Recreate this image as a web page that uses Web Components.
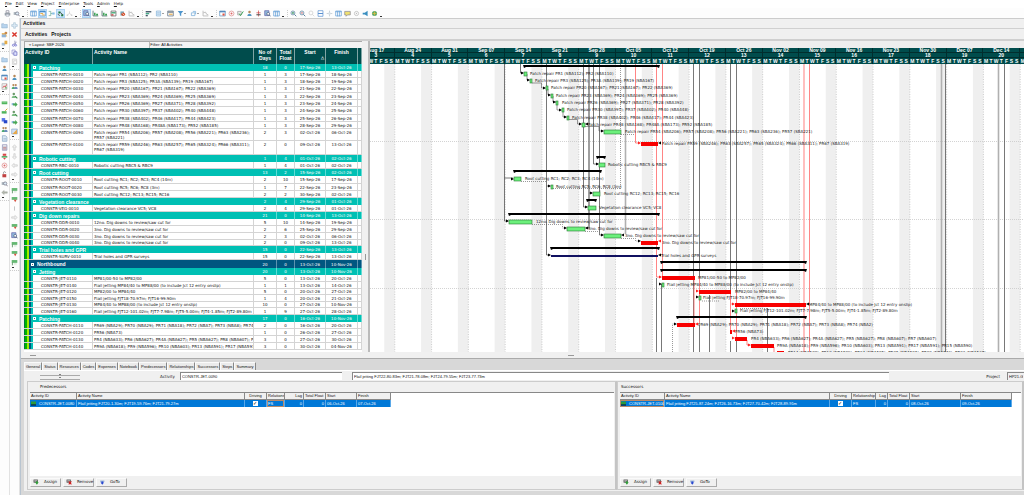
<!DOCTYPE html>
<html lang="en">
<head>
<meta charset="utf-8">
<title>Activities</title>
<style>
  html, body { height: 100%; margin: 0; }
  body {
    --ui: "DejaVu Sans", "Liberation Sans", sans-serif;
    --sans: "Liberation Sans", Arial, sans-serif;
    --face: #f0f0f0;
    --head: #004c4c;
    --group: #00c0b4;
    --band: #005680;
    font: 4px/6px var(--sans);
    color: #111;
    background: #fff;
    overflow: hidden;
  }
</style>
</head>
<body>
<planner-app></planner-app>

<script>
// ---------- icons, all on a 10x10 grid ----------
const ICONS = {
  print: '<path d="M3 1h4v3H3z" fill="#fff" stroke="#889"/><rect x="1" y="4" width="8" height="4" rx="1" fill="#9aa3ab"/><path d="M3 6h4v3H3z" fill="#e8eef4" stroke="#889" stroke-width=".6"/>',
  preview: '<path d="M1 3h6v4H1z" fill="#aab4bc"/><circle cx="6" cy="5" r="2.3" fill="#dcebf5" stroke="#778"/><path d="M7.6 6.8L9.5 9" stroke="#778" stroke-width="1.2"/>',
  columns: '<path d="M1 1.5h8v7H1z" fill="#fff" stroke="#5b9bd5"/><path d="M1 2.5h8M3.7 2v7M6.3 2v7" stroke="#5b9bd5"/>',
  gantt: '<path d="M1 1.5h8v7H1z" fill="#fff" stroke="#4a90d0"/><path d="M1 2.5h8" stroke="#2f7cc4" stroke-width="1.6"/><path d="M2 5h4M4 7h4" stroke="#e0a030" stroke-width="1.2"/>',
  network: '<path d="M1 2h3M1 8h3M4 2v6M4 5h3" stroke="#6a9" fill="none"/><rect x="6" y="3.5" width="3.5" height="3" fill="#8cc0e8"/>',
  trace: '<path d="M2 2h3v3H2zM6 6h3v3H6z" fill="#1f7a3a"/><path d="M5 3.5L8 6.5M1 6l3 2" stroke="#222"/>',
  fade: '<path d="M5 2v3M2 7l3-2 3 2" stroke="#ccc" fill="none"/><path d="M1 6.5h2v2H1zM7 6.5h2v2H7z" fill="#d4d4d4"/>',
  find: '<path d="M1 1h6v7H1z" fill="#8fb8dc" stroke="#66a"/><circle cx="6" cy="5.5" r="2" fill="#fff" stroke="#457"/><path d="M7.4 7L9.3 9" stroke="#457" stroke-width="1.3"/>',
  chart: '<path d="M1.5 1v7.5H9" stroke="#355" fill="none"/><path d="M3 4h2v4H3zM6 5.5h2.5V8H6z" fill="#2f9e4a"/>',
  grid: '<path d="M1.5 1.5h7v7h-7z" fill="#fff" stroke="#555"/><path d="M2 3h6v2H2z" fill="#4a7"/><path d="M2 6h3v2H2z" fill="#c44"/>',
  people: '<circle cx="5" cy="3" r="1.8" fill="#b88858"/><path d="M2 8.5c0-4 6-4 6 0z" fill="#4e93c0"/>',
  team: '<circle cx="3.4" cy="3" r="1.5" fill="#b88858"/><circle cx="6.8" cy="3" r="1.5" fill="#b88858"/><path d="M1 8.5c0-4 5-4 5 0z" fill="#4eaa70"/><path d="M4.5 8.5c0-4 5-4 5 0z" fill="#6a8cbc"/>',
  fire: '<path d="M2 2h5v6H2z" fill="#7ab"/><circle cx="6" cy="6" r="2.6" fill="#d4502c"/><path d="M5 5l2 2" stroke="#fff"/>',
  line: '<path d="M1.5 1v7.5H9M2 4l3-1 1.5 3L9 7" stroke="#a9a9a9" fill="none"/>',
  bars: '<path d="M1 1.5h8v2H1z" fill="#456"/><path d="M1 4.2h5v2H1z" fill="#4a8"/><path d="M1 7h3v2H1z" fill="#456"/>',
  sheet: '<path d="M2 1.5h6v7H2z" fill="#eaf3fb" stroke="#7fb0d8"/><path d="M3 4h4M3 6h4" stroke="#7fb0d8"/>',
  group: '<path d="M1 1.5h8v7H1z" fill="#fff" stroke="#567"/><path d="M1.5 3h7" stroke="#567" stroke-width="1.5"/><path d="M3 6h5" stroke="#e3a33a" stroke-width="1.5"/>',
  funnel: '<path d="M1 1.5h8L6 5v4L4 7.5V5z" fill="#4c94cc"/>',
  clip: '<path d="M2 4h5v4H2zM4 2h4v4" fill="none" stroke="#6fa8d8"/>',
  calendar: '<path d="M1 1.5h8v7H1z" fill="#fff" stroke="#5a8fc0"/><path d="M1 2.5h8" stroke="#3d78b4" stroke-width="1.6"/><path d="M5 5h3v3H5z" fill="#e05545"/>',
  target: '<circle cx="5" cy="5" r="3.5" fill="none" stroke="#d88"/><circle cx="5" cy="5" r="1.4" fill="#d66"/>',
  check: '<path d="M1 2h5v5H1z" fill="#eee" stroke="#999"/><path d="M3 5l2 3 4-6" stroke="#2f9e4a" stroke-width="1.3" fill="none"/>',
  level: '<path d="M5 .8v8.4M2 4h6" stroke="#c44"/><path d="M2 6h6v1.6H2z" fill="#555"/>',
  zoomin: '<circle cx="4.2" cy="4.2" r="2.8" fill="#eef6fc" stroke="#5a7f9c"/><path d="M6.3 6.3L9 9" stroke="#5a7f9c" stroke-width="1.4"/><path d="M2.8 4.2h2.8M4.2 2.8v2.8" stroke="#284"/>',
  zoomout: '<circle cx="4.2" cy="4.2" r="2.8" fill="#eef6fc" stroke="#5a7f9c"/><path d="M6.3 6.3L9 9" stroke="#5a7f9c" stroke-width="1.4"/><path d="M2.8 4.2h2.8" stroke="#c33"/>',
  zoomoff: '<circle cx="4.2" cy="4.2" r="2.8" fill="none" stroke="#ccc"/><path d="M6.3 6.3L9 9" stroke="#ccc"/>',
  split: '<path d="M1.5 1h7v8h-7z" fill="#fff" stroke="#5a8fd0"/><path d="M1.5 5h7" stroke="#5a8fd0" stroke-width="1.5"/>',
  move: '<path d="M5 1v8M1 5h8" stroke="#b4c0c8"/><path d="M3.5 3.5h3v3h-3z" fill="#d8e2ea"/>',
  note: '<path d="M1 2h8v5H5L3 9V7H1z" fill="#f0e070" stroke="#889"/>',
  gear: '<circle cx="5" cy="5" r="3" fill="none" stroke="#c8c8c8" stroke-width="1.4"/><circle cx="5" cy="5" r="1" fill="#bbb"/>',
  horn: '<path d="M1 4h3l4-3v8L4 6.5H1z" fill="#3a8fc0"/>',
  globe: '<circle cx="5" cy="5" r="3.6" fill="#58a868"/><path d="M2 5h6M5 2v6" stroke="#e8c040"/>',
  plus: '<path d="M3.7 1h2.6v2.7H9v2.6H6.3V9H3.7V6.3H1V3.7h2.7z" fill="#dbe9f4" stroke="#9bb6cc" stroke-width=".7"/>',
  cross: '<path d="M2 2l6 6M8 2L2 8" stroke="#d8342a" stroke-width="2"/>',
  scissors: '<path d="M5.5 1L6 6M8 3L4 6.5" stroke="#77a"/><circle cx="3.5" cy="7.5" r="1.5" fill="none" stroke="#66c"/><circle cx="6.8" cy="7.5" r="1.3" fill="none" stroke="#66c"/>',
  copy: '<path d="M1.5 1.5h4.5v5.5H1.5z" fill="#fff" stroke="#88c"/><path d="M4 4h4.5v5H4z" fill="#dfe3ff" stroke="#66b"/>',
  paste: '<path d="M2 1.5h6v7.5H2z" fill="#f2f2f2" stroke="#ccc"/><path d="M4 4h4v4H4z" fill="#fff" stroke="#ccc"/>',
  folder: '<path d="M1 2.5h3l1 1h4v5H1z" fill="#b8d4ee" stroke="#86a8c8" stroke-width=".7"/>',
  open: '<path d="M1 3h5l3 5H2z" fill="#e8b868"/><circle cx="7" cy="3" r="2" fill="#c98a4b"/><path d="M1 5h6v4H1z" fill="#8fb3d8"/>',
  bag: '<path d="M1 4h5v4H1z" fill="#a9c3dc"/><path d="M5 1h4v5H5z" fill="#e4ac48"/>',
  greenbar: '<path d="M1 3.5h8v4H1z" fill="#4fb45c"/><path d="M2 4.5h6" stroke="#a8e0ac"/>',
  greenedit: '<path d="M1 4.5h7v3.5H1z" fill="#4fb45c"/><path d="M6 4l3-3" stroke="#d49a30" stroke-width="1.4"/>',
  blocks: '<path d="M1 1.5h5v5H1z" fill="#5a78e8"/><path d="M4 4.5h5v4.5H4z" fill="#2748c8"/>',
  doc: '<path d="M2 1h4.5L8.5 3v6H2z" fill="#dce8f4" stroke="#8aa8c4"/><path d="M3.5 5h4M3.5 7h4" stroke="#8aa8c4" stroke-width=".7"/>',
  calc: '<path d="M2 1h6.5v8H2z" fill="#c8c8d4" stroke="#99b"/><path d="M3 2.5h4.5" stroke="#fff"/><path d="M3 5h4.5M3 7h4.5" stroke="#c88"/>',
  redgreen: '<path d="M2.5 1h5v3h-5z" fill="#d84848"/><path d="M1 4.5h8v2H1z" fill="#3d9e4e"/><path d="M3 7h4l-2 2.5z" fill="#d84848"/>',
  lock: '<path d="M2 4.5h5.5v4.5H2z" fill="#c04040"/><path d="M3.5 4V2.5c0-2 3-2 3 0" stroke="#777" fill="none"/>',
  graph: '<path d="M1.5 1h7v8h-7z" fill="#f4f4f4" stroke="#aaa"/><path d="M2.5 7l2-3 1.5 2 2-4" stroke="#c33" fill="none"/><path d="M6 6h2v2H6z" fill="#4a4"/>',
  left: '<path d="M1 5l3.5-3v2H9v2H4.5v2z" fill="#b4b8ae" stroke="#8c9088" stroke-width=".5"/>',
  pleft: '<path d="M1 5l3.5-3v2H9v2H4.5v2z" fill="#f2f2f2" stroke="#bbb" stroke-width=".7"/>',
  pright: '<path d="M9 5L5.5 2v2H1v2h4.5v2z" fill="#f2f2f2" stroke="#bbb" stroke-width=".7"/>',
  pup: '<path d="M5 1l3 3.5H6V9H4V4.5H2z" fill="#f2f2f2" stroke="#bbb" stroke-width=".7"/>',
  pdown: '<path d="M5 9l3-3.5H6V1H4v4.5H2z" fill="#f2f2f2" stroke="#bbb" stroke-width=".7"/>',
  addright: '<path d="M1 3h4v3H1z" fill="#8cb4dc"/><path d="M9.5 5L6 1.5v2H3v3h3v2z" fill="#48a854"/>',
  addman: '<circle cx="4" cy="3" r="1.8" fill="#6c9c6c"/><path d="M1 8.5c0-4 6-4 6 0z" fill="#7cbc84"/><path d="M6 6l3 3" stroke="#3a8a44" stroke-width="1.5"/>',
  pencil: '<path d="M1 1.5h8v7H1z" fill="#cfe0f4" stroke="#88a8d0"/><path d="M2 8.5L8.5 2v6.5z" fill="#e8a848"/>',
  tick: '<path d="M5 2v6" stroke="#aaa"/>',
  flag: '<path d="M1 1.5h8v4H1z" fill="#65b872"/><path d="M2 5v4" stroke="#377a40"/><path d="M4 7h4" stroke="#b8d8b8"/>',
  flagdown: '<path d="M1 1.5h8v4H1z" fill="#65b872"/><path d="M4 5.5h4L6 9z" fill="#d85040"/>',
  assign: '<path d="M1 1h7v5H1z" fill="#444"/><path d="M2 2h5v2.5H2z" fill="#bbb"/><path d="M5.5 3.5h2v2h2L6.5 9.5 3.5 5.5h2z" fill="#2a9e34"/>',
  remove: '<path d="M1 1h7v5H1z" fill="#444"/><path d="M2 2h5v2.5H2z" fill="#bbb"/><path d="M4.5 4l4.5 5M9 4L4.5 9" stroke="#d02020" stroke-width="1.7"/>',
  goto: '<path d="M2 2.5h7v2.5H2z" fill="#9bb4d8"/><path d="M4 4h3v2h1.5L5.5 9.5 2.5 6H4z" fill="#2848d0"/>',
};

// ---------- activity rows: one list feeds the table and the bars ----------
const G = "#6cf07c", R = "#f80000";
const ROWS = [
  { kind: "group", h: 7, name: "Patching", days: 18, float: 0, start: "17-Sep-26", finish: "13-Oct-26", bar: [524, 659] },
  { h: 7, id: "CONSTR-PATCH-0010", name: "Patch repair PR1 (SBA112); PR2 (SBA110)", days: 1, float: 3, start: "17-Sep-26", finish: "18-Sep-26", bar: [524, 527, G], lx: 530 },
  { h: 7, id: "CONSTR-PATCH-0020", name: "Patch repair PR3 (SBA125); PR3A (SBA139); PR19 (SBA167)", days: 1, float: 3, start: "18-Sep-26", finish: "19-Sep-26", bar: [530, 532, G], lx: 535 },
  { h: 8, id: "CONSTR-PATCH-0030", name: "Patch repair PR20 (SBA167); PR21 (SBA167); PR22 (SBA369)", days: 1, float: 3, start: "21-Sep-26", finish: "22-Sep-26", bar: [546, 548, G], lx: 551 },
  { h: 7, id: "CONSTR-PATCH-0040", name: "Patch repair PR23 (SBA369); PR24 (SBA369); PR25 (SBA369)", days: 1, float: 3, start: "22-Sep-26", finish: "23-Sep-26", bar: [551, 553, G], lx: 556 },
  { h: 7, id: "CONSTR-PATCH-0050", name: "Patch repair PR26 (SBA369); PR27 (SBA371); PR28 (SBA392)", days: 1, float: 3, start: "23-Sep-26", finish: "24-Sep-26", bar: [556, 558, G], lx: 562 },
  { h: 8, id: "CONSTR-PATCH-0060", name: "Patch repair PR30 (SBA397); PR37 (SBA402); PR40 (SBA448)", days: 1, float: 3, start: "24-Sep-26", finish: "25-Sep-26", bar: [562, 564, G], lx: 567 },
  { h: 7, id: "CONSTR-PATCH-0070", name: "Patch repair PR38 (SBA402); PR46 (SBA417); PR44 (SBA423)", days: 1, float: 3, start: "25-Sep-26", finish: "26-Sep-26", bar: [567, 569, G], lx: 572 },
  { h: 7, id: "CONSTR-PATCH-0080", name: "Patch repair PR48 (SBA168); PR48A (SBA173); PR52 (SBA185)", days: 1, float: 3, start: "28-Sep-26", finish: "29-Sep-26", bar: [582, 585, G], lx: 588 },
  { h: 12, id: "CONSTR-PATCH-0090", name: "Patch repair PR54 (SBA206); PR57 (SBA208); PR56 (SBA221); PR63 (SBA236); PR57 (SBA221)", days: 2, float: 3, start: "02-Oct-26", finish: "06-Oct-26", bar: [604, 621, G], lx: 625 },
  { h: 14, id: "CONSTR-PATCH-0100", name: "Patch repair PR59 (SBA246); PR63 (SBA257); PR65 (SBA324); PR66 (SBA311); PR67 (SBA319)", days: 2, float: 0, start: "09-Oct-26", finish: "13-Oct-26", bar: [641, 658, R], lx: 662 },
  { kind: "group", h: 7, name: "Robotic cutting", days: 1, float: 4, start: "01-Oct-26", finish: "02-Oct-26", bar: [597, 605] },
  { h: 7, id: "CONSTR-RBC-0010", name: "Robotic cutting RBC5 & RBC9", days: 1, float: 4, start: "01-Oct-26", finish: "02-Oct-26", bar: [599, 605, G], lx: 608 },
  { kind: "group", h: 7, name: "Root cutting", days: 13, float: 2, start: "15-Sep-26", finish: "02-Oct-26", bar: [514, 601] },
  { h: 8, id: "CONSTR-ROOT-0010", name: "Root cutting RC1; RC2; RC3; RC4 (14m)", days: 2, float: 10, start: "15-Sep-26", finish: "17-Sep-26", bar: [514, 521, G], lx: 525 },
  { h: 7, id: "CONSTR-ROOT-0020", name: "Root cutting RC5; RC6; RC8 (3m)", days: 1, float: 7, start: "22-Sep-26", finish: "23-Sep-26", bar: [551, 553, G], lx: 556 },
  { h: 7, id: "CONSTR-ROOT-0030", name: "Root cutting RC12; RC13; RC15; RC16", days: 2, float: 2, start: "30-Sep-26", finish: "02-Oct-26", bar: [593, 600, G], lx: 604 },
  { kind: "group", h: 7, name: "Vegetation clearance", days: 2, float: 4, start: "29-Sep-26", finish: "01-Oct-26", bar: [587, 596] },
  { h: 7, id: "CONSTR-VEG-0010", name: "Vegetation clearance VC5; VC8", days: 2, float: 4, start: "29-Sep-26", finish: "01-Oct-26", bar: [588, 596, G], lx: 599 },
  { kind: "group", h: 7, name: "Dig down repairs", days: 21, float: 0, start: "14-Sep-26", finish: "13-Oct-26", bar: [509, 659] },
  { h: 7, id: "CONSTR-DDR-0010", name: "12no. Dig downs to review/saw cut for", days: 5, float: 10, start: "14-Sep-26", finish: "19-Sep-26", bar: [509, 532, G], lx: 536 },
  { h: 7, id: "CONSTR-DDR-0020", name: "3no. Dig downs to review/saw cut for", days: 2, float: 6, start: "25-Sep-26", finish: "29-Sep-26", bar: [567, 585, G], lx: 588 },
  { h: 7, id: "CONSTR-DDR-0030", name: "3no. Dig downs to review/saw cut for", days: 2, float: 3, start: "02-Oct-26", finish: "06-Oct-26", bar: [604, 621, G], lx: 625 },
  { h: 6, id: "CONSTR-DDR-0040", name: "3no. Dig downs to review/saw cut for", days: 2, float: 0, start: "09-Oct-26", finish: "13-Oct-26", bar: [641, 658, R], lx: 662 },
  { kind: "group", h: 7, name: "Trial holes and GPR", days: 15, float: 0, start: "22-Sep-26", finish: "13-Oct-26", bar: [551, 659] },
  { h: 7, id: "CONSTR-SURV-0010", name: "Trial holes and GPR surveys", days: 15, float: 0, start: "22-Sep-26", finish: "13-Oct-26", bar: [551, 658, "#101060"], lx: 661 },
  { kind: "band", h: 8, name: "Northbound", days: 20, float: 0, start: "13-Oct-26", finish: "10-Nov-26", bar: [661, 806] },
  { kind: "group", h: 7, name: "Jetting", days: 20, float: 0, start: "13-Oct-26", finish: "10-Nov-26", bar: [661, 806] },
  { h: 7, id: "CONSTR-JET-0110", name: "MP81/00-50 to MP82/00", days: 5, float: 0, start: "13-Oct-26", finish: "20-Oct-26", bar: [662, 695, R], lx: 698 },
  { h: 7, id: "CONSTR-JET-0140", name: "Flail jetting MP84/40 to MP88/00 (to include Jct 12 entry onslip)", days: 1, float: 1, start: "13-Oct-26", finish: "14-Oct-26", bar: [662, 664, G], lx: 667 },
  { h: 6, id: "CONSTR-JET-0120", name: "MP82/00 to MP84/40", days: 5, float: 0, start: "20-Oct-26", finish: "27-Oct-26", bar: [699, 731, R], lx: 735 },
  { h: 7, id: "CONSTR-JET-0150", name: "Flail jetting FJT18-70.97m; FJT16-99.90m", days: 1, float: 4, start: "20-Oct-26", finish: "21-Oct-26", bar: [699, 701, G], lx: 703 },
  { h: 6, id: "CONSTR-JET-0130", name: "MP84/40 to MP88/00 (to include Jct 12 entry onslip)", days: 10, float: 0, start: "27-Oct-26", finish: "10-Nov-26", bar: [735, 806, R], lx: 809 },
  { h: 7, id: "CONSTR-JET-0160", name: "Flail jetting FJT12-101.02m; FJT7-7.98m; FJT5-5.00m; FJT4-1.85m; FJT2-89.80m", days: 1, float: 9, start: "27-Oct-26", finish: "28-Oct-26", bar: [735, 737, G], lx: 740 },
  { kind: "group", h: 7, name: "Patching", days: 17, float: 0, start: "16-Oct-26", finish: "10-Nov-26", bar: [677, 806] },
  { h: 7, id: "CONSTR-PATCH-0110", name: "PR69 (NBA29); PR70 (NBA29); PR71 (NBA18); PR72 (NBA7); PR73 (NBA8); PR74 (NBA2)", days: 2, float: 0, start: "16-Oct-26", finish: "20-Oct-26", bar: [677, 695, R], lx: 698 },
  { h: 7, id: "CONSTR-PATCH-0120", name: "PR56 (NBA73)", days: 1, float: 0, start: "26-Oct-26", finish: "27-Oct-26", bar: [730, 732, R], lx: 735 },
  { h: 7, id: "CONSTR-PATCH-0130", name: "PR4 (NBA633); PR6 (NBA627); PR4A (NBA627); PR5 (NBA627); PR8 (NBA607); PR7 (NBA607)", days: 3, float: 0, start: "27-Oct-26", finish: "30-Oct-26", bar: [735, 747, R], lx: 751 },
  { h: 7, id: "CONSTR-PATCH-0140", name: "PR9A (NBA618); PR9 (NBA596); PR10 (NBA603); PR13 (NBA591); PR17 (NBA591); PR15 (NBA590)", days: 3, float: 0, start: "30-Oct-26", finish: "04-Nov-26", bar: [751, 774, R], lx: 777 },
];

const LINK_SETS = [
  // driving lines from above the view
  ["#555", .8, "", "M504.5 64V221H508M520.5 64V73H523M546.5 64V255H550M546.5 186H550M583.5 64V207H587M593.5 64V164H598M599.5 64V235H603M504.5 178H513"],
  ["#777", 1.4, "", "M589 64V193H592M589 193V228H586"],
  ["#b0b0b0", 1.6, "", "M625.5 64V234M941.5 64V352M998.5 64V352"],
  ["#555", .8, "", "M693.5 64V352M699.5 64V277M730.5 64V291M736.5 64V291M945.5 64V352M1004.5 64V352"],
  // steps between patch repairs
  ["#555", .6, "", "M527 74V80H529M532 83H541.5V88H545M548 89V95H550M553 96V102H556M557 103V110H561M563 111V117H566M569 119.5H577.5V124H581M585 126.5H599V131H603"],
  ["#555", .8, "", "M656.5 278V352M661.5 284V352M709.5 295V352M767.5 308V352M699.5 325V352M730.5 341V352M736.5 341V352"],
  ["#555", .6, "1 1", "M620.5 64V190M521 181.5H546M553 188.5H620M600 191.5V190M532 224.5H562.5V228H566M585 231.5H599M621 238.5H635.5V241H640M621 134.5H635M672.5 352V324H676M702 301H720M740 308.5H767"],
  ["#f66", .8, "", "M635.5 64V143H640M656.5 64V277H661M662.5 64V277M809.5 64V352M694 277V323M699.5 277V323M696 291H698M730.5 291V331M736.5 291V338M731 304H734M747 340V345H750M774 347V352"],
  ["#ffb0b0", 1.6, "", "M804 64V352"],
];
const ARROWS = [
  [524, 73], [530, 80], [546, 88], [551, 95], [556, 102], [562, 110], [567, 117], [582, 124], [604, 131], [599, 164],
  [514, 179], [551, 186], [593, 193], [588, 207], [509, 221], [567, 228], [604, 235], [641, 241], [551, 255],
  [662, 284], [699, 297], [735, 311], [677, 324], [641, 143, 1], [662, 277, 1], [699, 291, 1], [735, 304, 1], [735, 338, 1], [751, 345, 1],
];
const BACK_ARROWS = [[585, 124], [658, 143], [585, 228], [621, 235], [658, 255], [806, 304], [658, 241, 1], [695, 324, 1], [732, 331, 1]];

function define(name, html) {
  customElements.define(name, class extends HTMLElement {
    constructor() {
      super();
      this.attachShadow({ mode: "open" });
    }
    connectedCallback() {
      this.shadowRoot.innerHTML = typeof html === "function" ? html(this) : html;
    }
  });
}

// <tool-button icon="print" on menu>
define("tool-button", (el) => `
<style>
  :host { display: flex; }
  button { display: flex; align-items: center; justify-content: center; width: 9px; height: 9px; margin: 0; padding: 0; border: 0; background: none; }
  :host([on]) button { background: #cce6fb; box-shadow: inset 0 0 0 1px #a8d2f4; }
  :host([menu]) button::after { content: ""; border: 1px solid transparent; border-top-color: #444; margin-top: 1px; }
  :host([menu]) button { width: 13px; }
  svg { width: 7px; height: 7px; flex: none; }
</style>
<button type="button" aria-label="${el.getAttribute("icon")}"><svg viewBox="0 0 10 10">${ICONS[el.getAttribute("icon")]}</svg></button>`);

define("menu-bar", `
<style>
  :host { display: block; background: #fff; font: 4px/8px var(--ui); }
  nav { display: flex; gap: 4px; padding: 0 5px; height: 8px; }
  a { color: #111; text-decoration: none; }
  a::first-letter { text-decoration: underline; }
</style>
<nav>${["File", "Edit", "View", "Project", "Enterprise", "Tools", "Admin", "Help"].map((t) => `<a href="#">${t}</a>`).join("")}</nav>`);

// "." is the overflow mark at the end of a group, "|" the grip that starts the next one
// a name may end in "*" (pressed) or "v" (has a menu)
function toolList(names) {
  return names.split(" ").map((n) => {
    if (n === ".") return "<i></i>";
    if (n === "|") return "<b></b>";
    return `<tool-button icon="${n.replace(/[*v]$/, "")}"${n.endsWith("*") ? " on" : ""}${n.endsWith("v") ? " menu" : ""}></tool-button>`;
  }).join("");
}

define("tool-bar", `
<style>
  :host { display: flex; align-items: center; height: 10px; padding-left: 3px; background: #fdfdfd; }
  i { width: 4px; height: 7px; display: flex; align-items: flex-end; justify-content: center; }
  i::after { content: ""; width: 2px; height: 1px; background: #333; }
  b { width: 1px; height: 7px; margin: 0 0 0 2px; border-left: 1px dotted #ccc; }
</style>
${toolList("print preview . | columns gantt* network trace* fade . | find* chart chart grid fire line . | bars sheetv group funnelv clipv line . | calendar target check people level find columns . | zoomin zoomout zoomoff split move columns note gear horn globe .")}`);

define("tool-rail", (el) => `
<style>
  :host { display: block; width: 10px; box-sizing: border-box; padding-top: 3px; border-right: 1px solid #e2e2e2; background: #fdfdfd; }
  i { display: block; height: 7px; }
  i::before { content: ""; display: block; width: 2px; height: 1px; margin: 0 0 2px 2px; background: #333; }
  i::after { content: ""; display: block; border-top: 1px dotted #ccc; }
</style>
${toolList(el.getAttribute("tools"))}`);

define("page-title", `
<style>
  :host { display: block; background: var(--face); }
  h1 { margin: 0; padding: 0 2px; font: bold 5px/9px var(--sans); height: 9px; border-bottom: 1px solid #d0d0d0; }
  nav { display: flex; height: 10px; gap: 4px; padding: 0 4px; font: bold 5px/10px var(--sans); border-bottom: 2px solid #cfcfcf; }
  a { color: #111; text-decoration: none; }
</style>
<h1>Activities</h1>
<nav><a href="#">Activities</a><a href="#">Projects</a></nav>`);

define("activity-table", () => `
<style>
  :host { display: block; background: #fff; overflow: hidden; }
  .layout { display: flex; height: 7px; box-sizing: border-box; background: #f4f4f4; border: solid #aaa; border-width: 1px 0 0 1px; line-height: 6px; }
  .layout span { flex: 0 0 125px; box-sizing: border-box; padding-left: 3px; border-right: 1px solid #bbb; white-space: pre; }
  table { width: 100%; table-layout: fixed; border-spacing: 0; font: 4px/5px var(--ui); --stripes: #007a3c 0 1px, #00b400 1px 3px, #a4e800 3px 5px, var(--band) 5px 7px; }
  th { height: 16px; box-sizing: border-box; padding: 1px 1px 0; background: var(--head); color: #fff; vertical-align: top; font: bold 5px/6px var(--sans); border-right: 1px solid #7fa5a5; }
  th.l { text-align: left; }
  th small { display: block; font-size: 4px; line-height: 5px; text-align: right; }
  td { box-sizing: border-box; padding: 0; text-align: center; white-space: nowrap; overflow: hidden; border: solid #d4d4d4; border-width: 0 1px 1px 0; }
  td:nth-child(1) { padding-left: 17px; text-align: left; background: linear-gradient(90deg, var(--stripes), var(--group) 7px 9px, #fff 9px); }
  tr:not([class=group], [class=band]) td:nth-child(2) { padding-left: 1px; text-align: left; }
  .wrap td { vertical-align: top; white-space: normal; padding-top: 1px; }
  .group td, .band td { color: #fff; background: var(--group); border-color: #5fdcd4; border-bottom: 0; }
  .band td { background: var(--band); border-color: #5c93b0; }
  .group td:first-child { background: linear-gradient(90deg, var(--stripes), var(--group) 7px); padding-left: 9px; }
  .band td:first-child { background: linear-gradient(90deg, var(--stripes), var(--band) 7px); padding-left: 7px; }
  td.name { font: bold 5px/6px var(--sans); border-right: 0; }
  .name button { display: inline-block; box-sizing: border-box; width: 3px; height: 3px; margin: 0 3px 1px 0; padding: 0; border: 1px solid #fff; background: #567; vertical-align: middle; }
</style>
<div class="layout"><span> ▿ Layout: SBF 2026</span>&#8202;Filter: All Activities</div>
<table>
  <colgroup><col style="width:69px"><col><col style="width:23px"><col style="width:18px"><col style="width:31px"><col style="width:32px"><col style="width:4px"></colgroup>
  <thead><tr><th class="l">Activity ID</th><th class="l">Activity Name</th><th>No of Days</th><th>Total Float</th><th>Start<small>△</small></th><th>Finish</th><th></th></tr></thead>
  <tbody>
  ${ROWS.map((r) => `<tr class="${r.kind || (r.h > 10 ? "wrap" : "")}" style="height:${r.h}px">
    ${r.kind ? `<td class="name" colspan="2"><button type="button" aria-label="Collapse"></button>${r.name}</td>` : `<td>${r.id}</td><td>${r.name.replace("&", "&amp;")}</td>`}
    ${[r.days, r.float, r.start, r.finish, ""].map((v) => `<td>${v}</td>`).join("")}</tr>`).join("")}
  </tbody>
</table>`);

// ---------- gantt ----------
const LEFT = 358, TOP = 64, WEEKS = 19, WIDTH = 699;
const WEEK = WIDTH / WEEKS;

function ganttBody() {
  let out = "", y = TOP;
  for (let w = 0; w < WEEKS; w++) {
    const x = LEFT + WEEK * (w + 1);
    out += `<path d="M${x - WEEK * 2 / 7} ${TOP}H${x}V352H${x - WEEK * 2 / 7}z" fill="#efefef"/><path d="M${x} ${TOP}V352" stroke="#c4c4c4" stroke-width=".8" stroke-dasharray="1 1.5"/>`;
  }
  out += `<path d="M358 141.5h${WIDTH}M358 219.5h${WIDTH}M358 288.5h${WIDTH}" stroke="#c8c8c8" stroke-width=".8" stroke-dasharray="1 1"/>`;
  LINK_SETS.forEach(([c, w, dash, d]) => {
    out += `<path d="${d}" fill="none" stroke="${c}" stroke-width="${w}" stroke-dasharray="${dash}"/>`;
  });
  ROWS.forEach((r) => {
    const [a, b, color] = r.bar;
    if (r.kind) {
      out += `<path d="M${a - 1} ${y + 1}H${b + 1}L${b} ${y + 4}L${b - 2} ${y + 3}H${a + 2}L${a} ${y + 4}z" fill="#000"/>`;
    } else {
      const thin = color === "#101060";
      out += `<rect x="${a}" y="${y + (thin ? 2 : 1)}" width="${b - a}" height="${thin ? 2 : 4}" fill="${color}" stroke="${color === G ? "#2a7a34" : color}" stroke-width="${color === G ? .6 : 0}"/>`;
      out += `<text x="${r.lx}" y="${y + 4}">${r.name.replace("&", "&amp;")}</text>`;
    }
    y += r.h;
  });
  // next bar, cut by the lower edge
  out += `<rect x="777" y="351" width="7" height="3" fill="${R}"/><text x="788" y="354">PR14 (NBA588); PR12 (NBA589); PR24 (NBA585); PR25 (NBA585); PR22 (NBA540); PR23 (NBA567)</text>`;
  ARROWS.forEach(([x, ay, red]) => { out += `<path d="M${x} ${ay}l-3 -1.5v3z" fill="${red ? "#f22" : "#000"}"/>`; });
  BACK_ARROWS.forEach(([x, ay, red]) => { out += `<path d="M${x} ${ay}l3 -1.5v3z" fill="${red ? "#f22" : "#000"}"/>`; });
  return out;
}

function weekLabel(i) {
  const d = new Date(Date.UTC(2026, 7, 17 + i * 7));
  return d.toLocaleString("en-US", { month: "short", timeZone: "UTC" }) + " " + String(d.getUTCDate()).padStart(2, "0");
}

define("gantt-chart", () => `
<style>
  :host { display: block; overflow: hidden; background: #fff; }
  .pad { height: 7px; background: #eee; }
  .canvas { width: ${WIDTH}px; margin-left: -12px; }
  .scale { display: grid; grid-template-columns: repeat(${WEEKS}, 1fr); background: var(--head); color: #fff; text-align: center; font: bold 5px/5px var(--sans); }
  .week { box-sizing: border-box; border-right: 1px solid #012e2e; }
  .week div { height: 5px; box-shadow: inset 0 -1px #012e2e; }
  .days { display: grid; grid-template-columns: repeat(7, 1fr); height: 6px; line-height: 6px; }
  svg { display: block; width: 100%; font: 4px var(--ui); fill: #222; }
</style>
<div class="pad"></div>
<div class="canvas">
  <div class="scale">
    ${Array.from({ length: WEEKS }, (_, i) => `<div class="week"><div>${weekLabel(i)}</div><div>${i + 3}</div><span class="days">${[..."MTWTFSS"].map((d) => `<span>${d}</span>`).join("")}</span></div>`).join("")}
  </div>
  <svg viewBox="${LEFT} ${TOP} ${WIDTH} 288">${ganttBody()}</svg>
</div>`);

// ---------- lower pane ----------
define("relation-list", (el) => {
  const cols = el.getAttribute("cols").split(" ");
  const vals = el.getAttribute("values").split("|");
  const heads = ["Activity ID", "Activity Name", "Driving", el.getAttribute("rel"), "Lag", "Total Float", "Start", "Finish"];
  return `
<style>
  :host { display: flex; flex-direction: column; box-sizing: border-box; min-width: 0; padding: 0 1px 1px 2px; border: 1px solid #ccc; border-right: 2px solid #c4c4c4; background: var(--face); }
  h2 { margin: 0; height: 10px; padding-left: var(--indent, 1px); font: 4px/9px var(--ui); }
  .sheet { flex: 1; min-height: 0; overflow: hidden; background: #fff; border-top: 1px solid #888; }
  table { table-layout: fixed; border-spacing: 0; width: 0; font: 4px/6px var(--sans); }
  th, td { height: 7px; padding: 0 1px; box-sizing: border-box; text-align: left; font-weight: normal; white-space: nowrap; overflow: hidden; border-right: 1px solid #888; }
  th { background: var(--face); border-bottom: 1px solid #888; }
  td { background: #0078d7; color: #fff; border-color: #5aa8e8; }
  td:nth-child(5), td:nth-child(6), th:nth-child(5) { text-align: right; }
  td:nth-child(3), th:nth-child(3) { text-align: center; }
  td svg { width: 5px; height: 5px; margin-right: 3px; vertical-align: middle; }
  td.cur { box-shadow: inset 0 0 0 1px #b98a6a; }
  input { appearance: none; display: inline-grid; width: 5px; height: 5px; margin: 0; background: #fff; vertical-align: middle; }
  input:checked::after { content: "✓"; color: #000; font: bold 5px/5px var(--ui); }
  footer { display: flex; gap: 2px; height: 12px; align-items: center; }
  footer button { display: flex; align-items: center; gap: 5px; width: 31px; height: 9px; box-sizing: border-box; padding: 0 2px; border: 1px solid #fafafa; border-right-color: #aaa; border-bottom-color: #aaa; background: var(--face); color: #111; font: 4px/6px var(--ui); }
  footer svg { width: 6px; height: 6px; flex: none; }
</style>
<h2>${el.getAttribute("heading")}</h2>
<div class="sheet"><table>
  <colgroup>${cols.map((c) => `<col style="width:${c}px">`).join("")}</colgroup>
  <thead><tr>${heads.map((h) => `<th>${h}</th>`).join("")}</tr></thead>
  <tbody><tr>
    <td class="${el.getAttribute("current") === "id" ? "cur" : ""}"><svg viewBox="0 0 10 10"><path d="M0 1h10v6H0z" fill="#2c9a3c"/><path d="M0 7h10v2H0z" fill="#111"/></svg>${vals[0]}</td>
    <td>${vals[1]}</td>
    <td><input type="checkbox" checked aria-label="Driving"></td>
    <td class="${el.getAttribute("current") === "rel" ? "cur" : ""}">FS</td><td>0</td><td>0</td><td>${vals[2]}</td><td>${vals[3]}</td>
  </tr></tbody>
</table></div>
<footer>${[["assign", "Assign"], ["remove", "Remove"], ["goto", "GoTo"]].map(([i, t]) => `<button type="button"><svg viewBox="0 0 10 10">${ICONS[i]}</svg>${t}</button>`).join("")}</footer>`;
});

define("detail-pane", `
<style>
  :host { display: flex; flex-direction: column; height: 137px; box-sizing: border-box; padding: 3px 0 4px 3px; border-top: 1px solid #aaa; background: #d8d8d8; }
  nav { display: flex; height: 8px; line-height: 7px; }
  nav button { margin: 0; padding: 0 1px; border: solid #fafafa; border-width: 1px 1px 0; border-right-color: #888; background: #ebebeb; color: #111; font: 4px/6px var(--sans); }
  .panel { flex: 1; display: flex; flex-direction: column; min-height: 0; padding: 0 0 1px 3px; background: var(--face); border-top: 1px solid #fff; }
  .fields { display: flex; align-items: center; height: 10px; font: 4px/7px var(--ui); white-space: nowrap; }
  .spin { display: grid; width: 40px; margin: 0 80px 0 13px; }
  .spin button { display: flex; align-items: center; justify-content: center; height: 4px; padding: 0; border: 0; border-bottom: 1px solid #aaa; background: var(--face); }
  .spin i { border: 1px solid transparent; border-bottom-color: #111; }
  .spin button + button i { border-color: #111 transparent transparent; }
  input { box-sizing: border-box; height: 8px; margin: 0; padding: 0 1px; border: solid #888; border-width: 1px 0 0 1px; background: #fff; color: #111; font: 4px/6px var(--sans); }
  #code { width: 162px; margin: 0 10px 0 5px; }
  #title { flex: 1; min-width: 0; margin-right: 97px; }
  #project { width: 17px; margin-left: 7px; background: var(--face); }
  .lists { flex: 1; display: grid; grid-template-columns: 590fr 407fr; min-height: 0; }
</style>
<nav>${["General", "Status", "Resources", "Codes", "Expenses", "Notebook", "Predecessors", "Relationships", "Successors", "Steps", "Summary"].map((t) => `<button type="button">${t}</button>`).join("")}</nav>
<div class="panel">
  <div class="fields">
    <div class="spin"><button type="button" aria-label="Previous"><i></i></button><button type="button" aria-label="Next"><i></i></button></div>
    <label for="code">Activity</label><input id="code" value="CONSTR-JET-0090">
    <input id="title" aria-label="Activity name" value="Flail jetting FJT22-80.83m; FJT21-78.08m; FJT24-79.55m; FJT23-77.73m">
    <label for="project">Project</label><input id="project" value="HP21-GCT">
  </div>
  <div class="lists">
    <relation-list style="--indent:10px" heading="Predecessors" rel="Relations" current="rel" cols="47 168 22 18 19 22 31 34" values="CONSTR-JET-0080|Flail jetting FJT20-1.30m; FJT19-59.76m; FJT21-79.27m|06-Oct-26|07-Oct-26"></relation-list>
    <relation-list heading="Successors" rel="Relationship" current="id" cols="45 165 22 24 12 22 51 51" values="CONSTR-JET-0100|Flail jetting FJT25-87.24m; FJT26-16.73m; FJT27-70.42m; FJT28-89.91m|08-Oct-26|09-Oct-26"></relation-list>
  </div>
</div>`);

define("split-view", `
<style>
  :host { flex: 1; display: flex; flex-direction: column; min-height: 0; background: var(--face); }
  .panes { flex: 1; display: flex; min-height: 0; padding-left: 3px; }
  ::slotted([slot=left]) { flex: 0 0 338px; }
  ::slotted([slot=right]) { flex: 1; min-width: 0; }
  .bar { display: flex; align-items: center; justify-content: center; width: 8px; box-sizing: border-box; border-right: 2px solid #bbb; }
  .bar i { width: 1px; height: 6px; background: #999; margin-top: 120px; }
  .foot { display: flex; height: 6px; align-items: center; padding-left: 9px; gap: 532px; }
  .foot i { width: 6px; height: 1px; background: #999; }
</style>
<div class="panes"><slot name="left"></slot><div class="bar"><i></i></div><slot name="right"></slot></div>
<div class="foot"><i></i><i></i></div>`);

define("planner-app", `
<style>
  :host { display: flex; flex-direction: column; height: 100vh; }
  .body { flex: 1; display: flex; min-height: 0; }
  main { flex: 1; display: flex; flex-direction: column; min-width: 0; border-left: 1px solid #b8c4d0; border-top: 1px solid #ccc; box-sizing: border-box; }
</style>
<menu-bar></menu-bar>
<tool-bar></tool-bar>
<div class="body">
  <tool-rail tools="folder open bag . folder people calendar graph . greenbar greenedit blocks team doc calc redgreen target lock preview left ."></tool-rail>
  <tool-rail tools="plus cross scissors copy paste . people team addman addright addman addright pencil . pup pdown pleft pright . flag flagdown tick pright flagdown find flag flagdown flag ."></tool-rail>
  <main>
    <page-title></page-title>
    <split-view>
      <activity-table slot="left"></activity-table>
      <gantt-chart slot="right"></gantt-chart>
    </split-view>
    <detail-pane></detail-pane>
  </main>
</div>`);
</script>
</body>
</html>
